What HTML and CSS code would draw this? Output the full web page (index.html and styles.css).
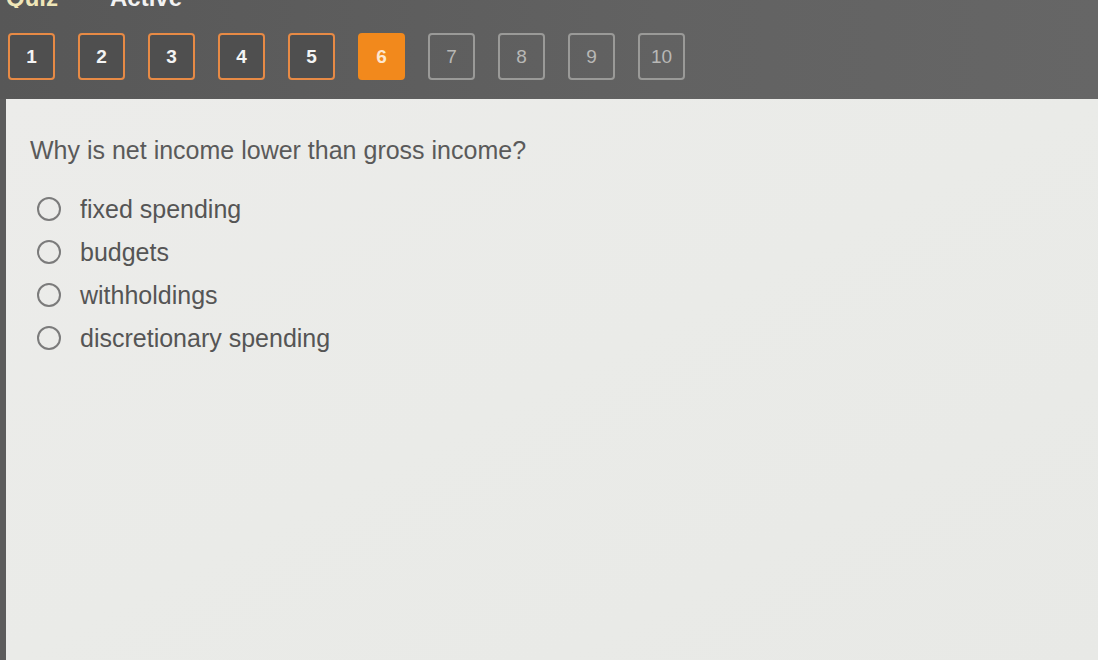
FILE: index.html
```html
<!DOCTYPE html>
<html lang="en">
<head>
  <meta charset="UTF-8">
  <meta name="viewport" content="width=device-width, initial-scale=1.0">
  <title>Quiz</title>
  <link rel="stylesheet" href="styles.css">
</head>
<body>
  <header class="quiz-bar">
    <div class="tabs">
      <span class="tab tab-quiz">Quiz</span>
      <span class="tab tab-active">Active</span>
    </div>
    <nav class="steps">
      <button class="step done">1</button>
      <button class="step done">2</button>
      <button class="step done">3</button>
      <button class="step done">4</button>
      <button class="step done">5</button>
      <button class="step current">6</button>
      <button class="step">7</button>
      <button class="step">8</button>
      <button class="step">9</button>
      <button class="step">10</button>
    </nav>
  </header>
  <main class="question-panel">
    <h2 class="question">Why is net income lower than gross income?</h2>
    <ul class="options">
      <li class="option"><span class="radio"></span>fixed spending</li>
      <li class="option"><span class="radio"></span>budgets</li>
      <li class="option"><span class="radio"></span>withholdings</li>
      <li class="option"><span class="radio"></span>discretionary spending</li>
    </ul>
  </main>
</body>
</html>
```

FILE: styles.css
```css
html, body {
  height: 100%;
}
body {
  margin: 0;
  font-family: 'Liberation Sans', Arial, sans-serif;
  background: #5c5c5c;
  display: flex;
  flex-direction: column;
  overflow: hidden;
}
.quiz-bar {
  background: linear-gradient(to right, #575757, #626262 60%, #666666);
  height: 99px;
  flex-shrink: 0;
}
.tabs {
  display: flex;
  gap: 52px;
  padding-left: 6px;
  height: 8px;
  overflow: hidden;
}
.tab {
  display: block;
  font-size: 24px;
  font-weight: bold;
  line-height: 24px;
  margin-top: -14px;
}
.tab-quiz {
  color: #efe6b8;
}
.tab-active {
  color: #f2f2f2;
}
.steps {
  display: flex;
  gap: 23px;
  padding: 25px 0 0 8px;
}
.step {
  width: 47px;
  height: 47px;
  box-sizing: border-box;
  border: 2px solid #9a9a98;
  border-radius: 4px;
  background: transparent;
  color: #b8b8b6;
  font-family: 'Liberation Sans', Arial, sans-serif;
  font-size: 19px;
  padding: 0;
  cursor: pointer;
}
.step.done {
  border-color: #e78a45;
  background: #4f4f4f;
  color: #f4f4f4;
  font-weight: bold;
}
.step.current {
  border-color: #f2891c;
  background: #f2891c;
  color: #fde7cf;
  font-weight: bold;
}
.question-panel {
  flex: 1;
  background: linear-gradient(to bottom right, #ececea, #eaebe8 50%, #e8e9e6);
  margin-left: 6px;
  padding: 36px 0 0 24px;
}
.question {
  margin: 0 0 30px;
  font-size: 25px;
  line-height: 30px;
  font-weight: normal;
  color: #5a5a5a;
}
.options {
  list-style: none;
  margin: 0;
  padding: 0 0 0 7px;
  display: flex;
  flex-direction: column;
  gap: 15px;
}
.option {
  display: flex;
  align-items: center;
  gap: 19px;
  font-size: 25px;
  line-height: 28px;
  color: #555555;
}
.radio {
  width: 20px;
  height: 20px;
  border: 2.5px solid #7b7b7b;
  border-radius: 50%;
  flex-shrink: 0;
}
```
